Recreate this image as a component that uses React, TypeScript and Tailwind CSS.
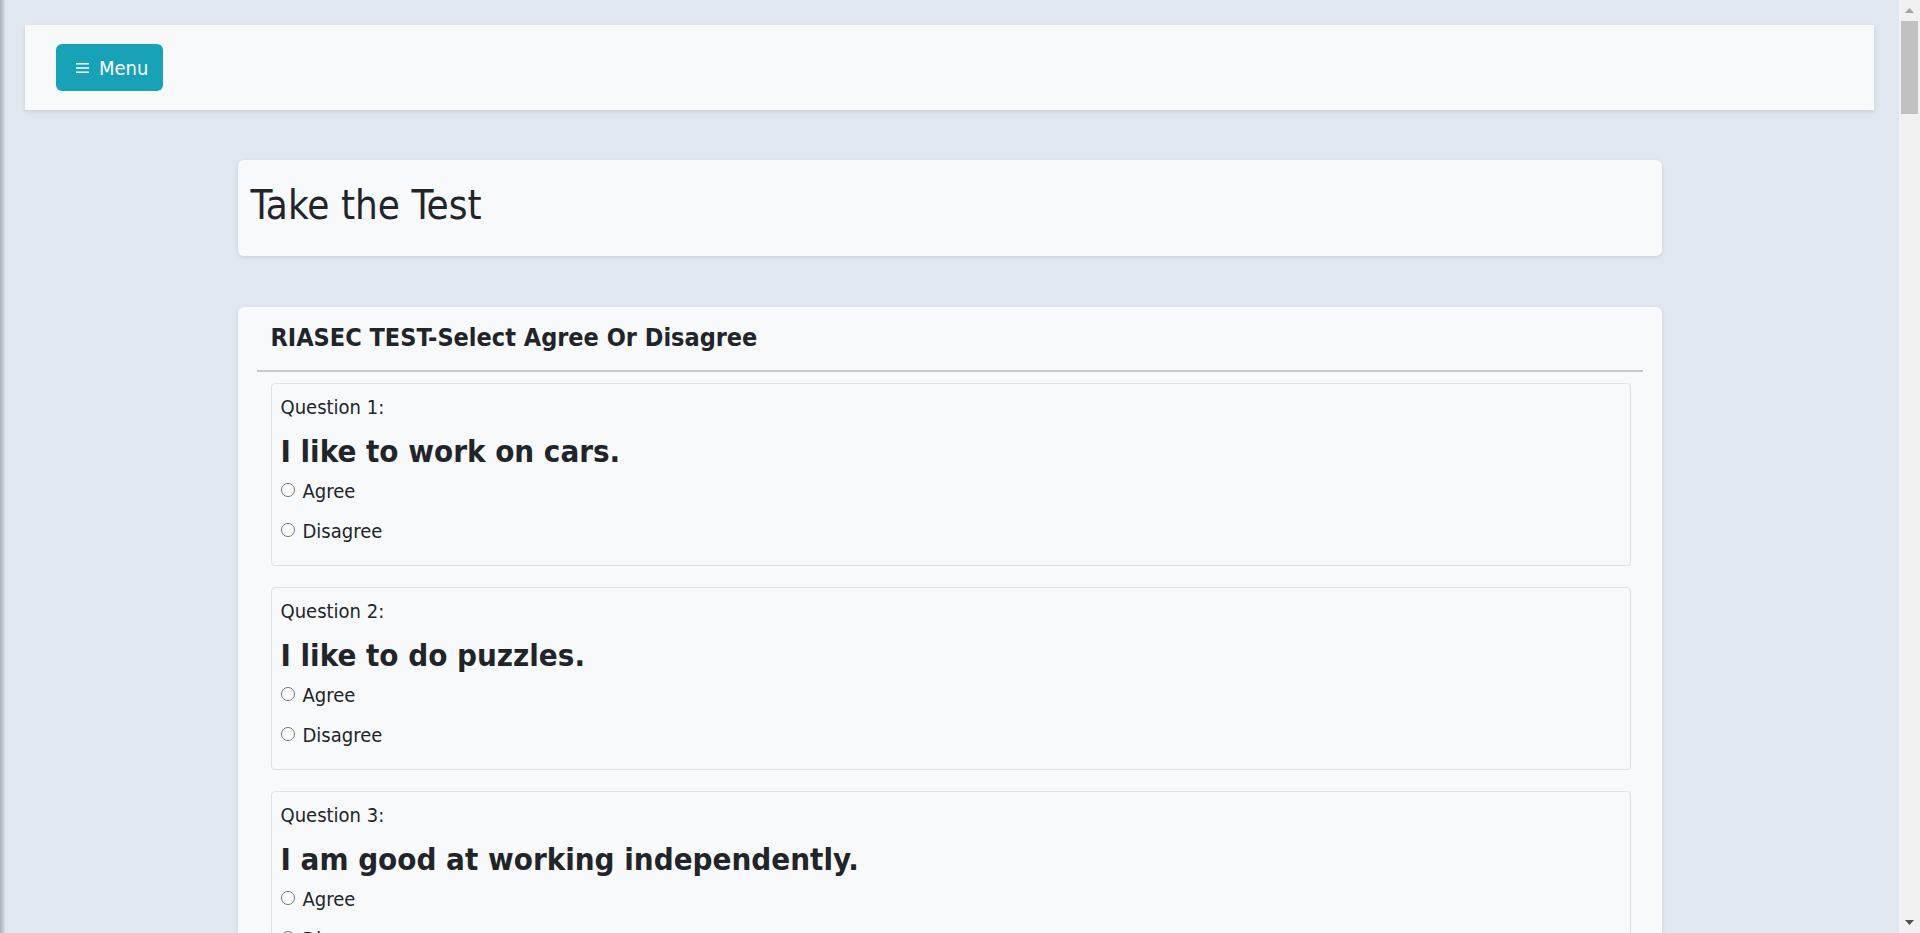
import React from "react";

const questions = [
  "I like to work on cars.",
  "I like to do puzzles.",
  "I am good at working independently.",
  "I like to work in teams.",
  "I am an ambitious person, I set goals for myself.",
  "I like to organize things, (files, desks/offices).",
  "I like to build things.",
  "I like to read about art and music.",
  "I like to have clear instructions to follow.",
  "I like to try to influence or persuade people.",
  "I like to do experiments.",
  "I like to teach or train people.",
  "I like trying to help people solve their problems.",
  "I like to take care of animals.",
  "I wouldn't mind working 8 hours per day in an office.",
  "I like selling things.",
  "I enjoy creative writing.",
  "I enjoy science.",
  "I am quick to take on new responsibilities.",
  "I am interested in healing people.",
  "I enjoy trying to figure out how things work.",
  "I like putting things together or assembling things.",
  "I am a creative person.",
  "I pay attention to details.",
  "I like to do filing or typing.",
  "I like to analyze things (problems/situations).",
  "I like to play instruments or sing.",
  "I enjoy learning about other cultures.",
  "I would like to start my own business.",
  "I like to cook.",
  "I like acting in plays.",
  "I am a practical person.",
  "I like working with numbers or charts.",
  "I like to get into discussions about issues.",
  "I am good at keeping records of my work.",
  "I like to lead.",
  "I like working outdoors.",
  "I would like to work in an office.",
  "I'm good at math.",
  "I like helping people.",
  "I like to draw.",
  "I like to give speeches.",
];

const Radio = ({ name, label }: { name: string; label: string }) => (
  <label className="flex items-center h-[30px] leading-[30px] text-[20px]">
    <input
      type="radio"
      name={name}
      className="appearance-none w-[14px] h-[14px] rounded-full border border-[#767676] bg-white mr-[8px] mt-[-2px]"
    />
    {label}
  </label>
);

const Question = ({ n, text }: { n: number; text: string }) => (
  <div className="border border-[#dee2e6] rounded-[4px] ml-[14px] mr-[12px] mb-[21px] pt-[8px] pb-[19px] px-[9px]">
    <div className="text-[20px] leading-[30px]">Question {n}:</div>
    <h3 className="text-[31px] font-bold leading-[35px] mt-[12px] mb-[7px]">{text}</h3>
    <div className="flex flex-col gap-[10px]">
      <Radio name={"q" + n} label="Agree" />
      <Radio name={"q" + n} label="Disagree" />
    </div>
  </div>
);

// window scrollbar, drawn since the page itself shows none
const Scrollbar = () => (
  <aside className="w-[21px] h-screen bg-[#f1f1f1] flex flex-col shrink-0">
    <div className="h-[21px] flex items-center justify-center">
      <svg width="9" height="5" viewBox="0 0 9 5">
        <path d="M0 5 L4.5 0 L9 5 Z" fill="#a3a3a3" />
      </svg>
    </div>
    <div className="mx-[2px] h-[93px] bg-[#c1c1c1]" />
    <div className="flex-1" />
    <div className="h-[21px] flex items-center justify-center">
      <svg width="9" height="5" viewBox="0 0 9 5">
        <path d="M0 0 L9 0 L4.5 5 Z" fill="#505050" />
      </svg>
    </div>
  </aside>
);

export default function App() {
  return (
    <div className="flex h-screen bg-[#e1e7ef] text-[#212529] font-['DejaVu_Sans_Condensed','DejaVu_Sans',sans-serif]">
      <div className="fixed left-0 top-0 h-full w-[5px] bg-gradient-to-r from-[#a9aeb8] to-[#d6dce4]" />

      <div className="flex-1 overflow-y-auto [scrollbar-width:none]">
        <div className="pt-[25px] px-[25px]">
          <nav className="h-[85px] bg-[#f8f9fb] flex items-center pl-[31px] shadow-[0_2px_5px_rgba(0,0,0,0.1)]">
            <button className="h-[47px] w-[107px] rounded-[6px] bg-[#17a2b8] text-white text-[20px] flex items-center pl-[20px] gap-[10px]">
              <svg width="13" height="12" viewBox="0 0 13 12" fill="#ffffff">
                <rect x="0" y="1" width="13" height="1.5" />
                <rect x="0" y="5.25" width="13" height="1.5" />
                <rect x="0" y="9.5" width="13" height="1.5" />
              </svg>
              Menu
            </button>
          </nav>
        </div>

        <main className="w-[1424px] mx-auto mt-[50px] pb-[40px]">
          <div className="h-[96px] bg-[#f8f9fb] rounded-[6px] shadow-[0_1px_4px_rgba(0,0,0,0.1)] pl-[13px] pt-[21px]">
            <h1 className="text-[40px] leading-[48px]">Take the Test</h1>
          </div>

          <div className="mt-[51px] bg-[#f8f9fb] rounded-[6px] shadow-[0_1px_4px_rgba(0,0,0,0.08)] px-[19px] pt-[15px] pb-[1px]">
            <h4 className="text-[25px] font-bold leading-[31px] pl-[14px]">RIASEC TEST-Select Agree Or Disagree</h4>
            <hr className="mt-[17px] mb-[11px] border-0 border-t-2 border-[#c6c8cb]" />
            {questions.map((q, i) => (
              <Question key={i} n={i + 1} text={q} />
            ))}
          </div>
        </main>
      </div>

      <Scrollbar />
    </div>
  );
}
